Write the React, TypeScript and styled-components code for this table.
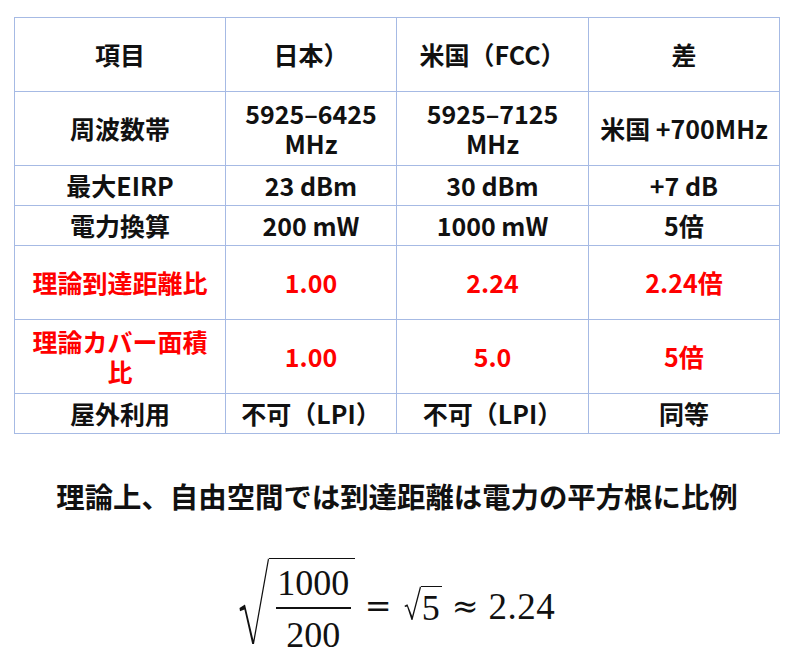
import React from "react";
import styled, { createGlobalStyle } from "styled-components";

/* ─────────────── Types ─────────────── */
interface Row {
  cells: string[];
  tall?: boolean;
  red?: boolean;
}

/* ─────────────── Data ─────────────── */
const HEAD = ["項目", "日本）", "米国（FCC）", "差"];

const ROWS: Row[] = [
  { cells: ["周波数帯", "5925–6425\nMHz", "5925–7125\nMHz", "米国 +700MHz"], tall: true },
  { cells: ["最大EIRP", "23 dBm", "30 dBm", "+7 dB"] },
  { cells: ["電力換算", "200 mW", "1000 mW", "5倍"] },
  { cells: ["理論到達距離比", "1.00", "2.24", "2.24倍"], tall: true, red: true },
  { cells: ["理論カバー面積比", "1.00", "5.0", "5倍"], tall: true, red: true },
  { cells: ["屋外利用", "不可（LPI）", "不可（LPI）", "同等"] },
];

const COLS = [211, 171, 192, 191];

/* ─────────────── Styled ─────────────── */
const GlobalStyle = createGlobalStyle`
  html, body {
    margin: 0;
    padding: 0;
    background: #ffffff;
  }
  body {
    font-family: "Noto Sans CJK JP", "Noto Sans", sans-serif;
    color: #111;
  }
`;

const Page = styled.div`
  width: 766px;
  padding: 17px 0 0 14px;
  display: flex;
  flex-direction: column;
  align-items: center;
`;

const Table = styled.table`
  width: 766px;
  border-collapse: collapse;
  table-layout: fixed;
`;

const Tr = styled.tr<{ $tall?: boolean }>`
  height: ${({ $tall }) => ($tall ? "74px" : "40px")};
`;

const Cell = styled.td<{ $red?: boolean }>`
  border: 1px solid #a6bae4;
  padding: 0 6px 2px;
  text-align: center;
  vertical-align: middle;
  font-size: 25px;
  font-weight: 700;
  line-height: 30px;
  white-space: pre-line;
  color: ${({ $red }) => ($red ? "#ff0000" : "#111")};
`;

const Caption = styled.p`
  margin: 44px 0 0;
  font-size: 28.4px;
  font-weight: 700;
  line-height: 36px;
  color: #111;
`;

/* ── formula ── */
const Formula = styled.div`
  margin-top: 44px;
  display: flex;
  align-items: center;
  font-family: "Liberation Serif", "DejaVu Serif", serif;
  font-size: 36px;
  color: #111;
  line-height: 1;
`;

const Radical = styled.span`
  display: inline-flex;
  align-items: stretch;
`;

const Radicand = styled.span<{ $big?: boolean }>`
  display: inline-flex;
  align-items: center;
  border-top: 1.5px solid #111;
  padding: ${({ $big }) => ($big ? "4px 4px 0 7px" : "3px 2px 0 1px")};
`;

const Fraction = styled.span`
  display: inline-flex;
  flex-direction: column;
  align-items: center;
`;

const Num = styled.span`
  padding: 2px 1.5px 6px;
`;

const Bar = styled.span`
  align-self: stretch;
  height: 1.5px;
  background: #111;
`;

const Den = styled.span`
  padding: 8px 1.5px 2px;
`;

const Op = styled.span<{ $l: number; $r: number }>`
  font-family: "DejaVu Serif", serif;
  font-size: 32px;
  margin: 0 ${({ $r }) => $r}px 0 ${({ $l }) => $l}px;
`;

const Value = styled.span`
  font-size: 37px;
  letter-spacing: 0.5px;
`;

/* ─────────────── Component ─────────────── */
const RootSign: React.FC<{ w: number; h: number }> = ({ w, h }) => (
  <svg width={w} height={h} viewBox={`0 0 ${w} ${h}`} style={{ display: "block" }}>
    <path
      d={`M0.5 ${h * 0.58} L${w * 0.2} ${h * 0.54} L${w * 0.48} ${h - 4} L${w - 1} 0.2 L${w} 1.5 L${w * 0.5} ${h} L${w * 0.44} ${h} L${w * 0.18} ${h * 0.6} L1 ${h * 0.62} Z`}
      fill="#111"
    />
  </svg>
);

const App: React.FC = () => (
  <>
    <GlobalStyle />
    <Page>
      <Table>
        <colgroup>
          {COLS.map((w, i) => (
            <col key={i} style={{ width: w }} />
          ))}
        </colgroup>
        <tbody>
          <Tr $tall>
            {HEAD.map((h) => (
              <Cell key={h}>{h}</Cell>
            ))}
          </Tr>
          {ROWS.map((r) => (
            <Tr key={r.cells[0]} $tall={r.tall}>
              {r.cells.map((c, i) => (
                <Cell key={i} $red={r.red}>
                  {c}
                </Cell>
              ))}
            </Tr>
          ))}
        </tbody>
      </Table>

      <Caption>理論上、自由空間では到達距離は電力の平方根に比例</Caption>

      <Formula>
        <Radical>
          <RootSign w={30} h={86} />
          <Radicand $big>
            <Fraction>
              <Num>1000</Num>
              <Bar />
              <Den>200</Den>
            </Fraction>
          </Radicand>
        </Radical>
        <Op $l={10} $r={12}>=</Op>
        <Radical>
          <RootSign w={17} h={34} />
          <Radicand>5</Radicand>
        </Radical>
        <Op $l={10} $r={10}>≈</Op>
        <Value>2.24</Value>
      </Formula>
    </Page>
  </>
);

export default App;
